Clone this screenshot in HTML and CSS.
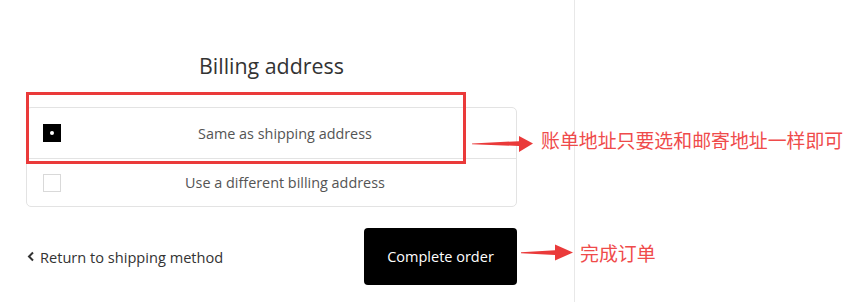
FILE: index.html
```html
<!DOCTYPE html>
<html lang="en">
<head>
<meta charset="utf-8">
<title>Billing address</title>
<link rel="stylesheet" href="styles.css">
</head>
<body>
<div class="page">
  <div class="main">
    <h2 class="title">Billing address</h2>
    <div class="card">
      <label class="row">
        <span class="check checked"><span class="dot"></span></span>
        <span class="label">Same as shipping address</span>
      </label>
      <label class="row row-second">
        <span class="check"></span>
        <span class="label">Use a different billing address</span>
      </label>
    </div>
    <div class="actions">
      <a class="back" href="#">
        <svg class="chev" width="8" height="11" viewBox="0 0 8 11"><path d="M6 1.5 L2 5.5 L6 9.5" fill="none" stroke="#333" stroke-width="2"/></svg>
        <span>Return to shipping method</span>
      </a>
      <button class="complete">Complete order</button>
    </div>
  </div>
  <div class="side"></div>

  <div class="ann-box"></div>
  <svg class="ann-arrow arrow-1" width="62" height="18" viewBox="0 0 62 18"><polygon points="0,8.4 47,6.2 47,1 61,8.5 47,17 47,11 0,9.2" fill="#ea3a3a"/></svg>
  <div class="ann-text text-1">账单地址只要选和邮寄地址一样即可</div>
  <svg class="ann-arrow arrow-2" width="54" height="18" viewBox="0 0 54 18"><polygon points="0,8.2 34,6.2 34,0.5 52,8.5 34,16.5 34,11 0,9.2" fill="#ea3a3a"/></svg>
  <div class="ann-text text-2">完成订单</div>
</div>
</body>
</html>
```

FILE: styles.css
```css
* { box-sizing: border-box; }
html, body { margin: 0; padding: 0; background: #fff; }
body { font-family: "Open Sans", "Noto Sans", sans-serif; color: #333; }

.page {
  position: relative;
  display: flex;
  width: 860px;
  height: 302px;
  overflow: hidden;
}

.main {
  width: 575px;
  height: 302px;
  border-right: 1px solid #e8e8e8;
  padding: 0 57px 0 26px;
}
.side { flex: 1; }

.title {
  margin: 0;
  padding-top: 52px;
  font-size: 21.4px;
  line-height: 28px;
  font-weight: 400;
  color: #333;
  text-align: center;
}

.card {
  margin-top: 27px;
  border: 1px solid #e3e3e3;
  border-radius: 5px;
}
.row {
  display: flex;
  align-items: center;
  height: 50px;
  padding: 0 7px 0 16px;
}
.row-second {
  height: 48px;
  border-top: 1px solid #e3e3e3;
}
.check {
  width: 18px;
  height: 18px;
  border: 1px solid #d9d9d9;
  background: #fff;
  display: flex;
  align-items: center;
  justify-content: center;
  flex: none;
}
.check.checked { background: #000; border-color: #000; }
.dot { width: 4px; height: 4px; border-radius: 50%; background: #fff; }
.label {
  flex: 1;
  text-align: center;
  font-size: 14.4px;
  color: #545454;
}

.actions {
  margin-top: 21px;
  display: flex;
  align-items: center;
  justify-content: space-between;
}
.back {
  display: flex;
  align-items: center;
  gap: 5px;
  padding-left: 1px;
  color: #333;
  text-decoration: none;
  font-size: 14.6px;
}
.chev { display: block; }
.complete {
  width: 153px;
  height: 57px;
  border: 0;
  border-radius: 4px;
  background: #000;
  color: #fff;
  font-family: "Open Sans", "Noto Sans", sans-serif;
  font-size: 14.5px;
  padding: 0;
}

.ann-box {
  position: absolute;
  left: 26px;
  top: 92px;
  width: 440px;
  height: 72px;
  border: 3px solid #ea3a3a;
}
.ann-arrow { position: absolute; display: block; }
.arrow-1 { left: 472px; top: 135px; }
.arrow-2 { left: 521px; top: 244px; }
.ann-text {
  position: absolute;
  font-family: "Noto Sans CJK SC", sans-serif;
  font-size: 18.9px;
  line-height: 22px;
  color: #ef4b4b;
  white-space: nowrap;
}
.text-1 { left: 541px; top: 129px; }
.text-2 { left: 580px; top: 242px; }
```
